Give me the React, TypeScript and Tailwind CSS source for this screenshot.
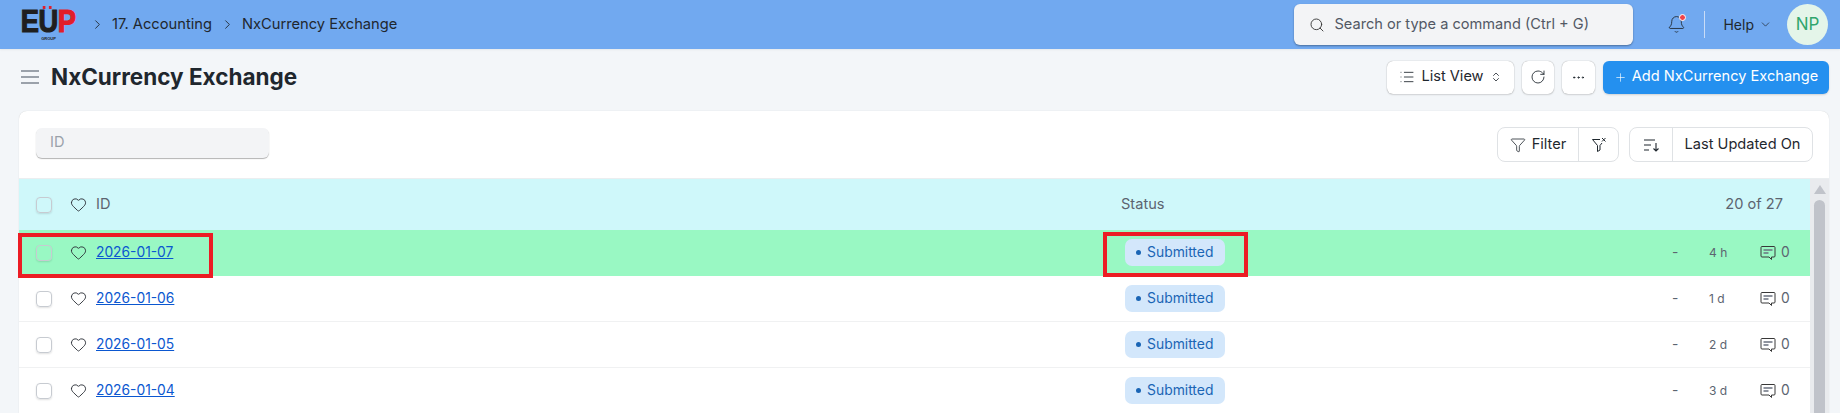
import React from 'react';
import { Search, Bell, ChevronDown, ChevronRight, ChevronsUpDown, RotateCw, Ellipsis, Plus, List, Heart, Filter } from 'lucide-react';

const rows = [
  { id: '2026-01-07', age: '4 h', active: true },
  { id: '2026-01-06', age: '1 d', active: false },
  { id: '2026-01-05', age: '2 d', active: false },
  { id: '2026-01-04', age: '3 d', active: false },
];

const CommentIcon = () => (
  <svg width="16" height="16" viewBox="0 0 16 16" fill="none" stroke="#383838" strokeWidth="1" strokeLinejoin="round">
    <path d="M2 1.500h12a1 1 0 0 1 1 1v8.500a1 1 0 0 1-1 1h-2.500v2.500l-2.500-2.500h-7a1 1 0 0 1-1-1v-8.500a1 1 0 0 1 1-1z" />
    <path d="M3.500 5h9M3.500 8h5" strokeWidth="1.300" stroke="#6b7280" />
  </svg>
);

const FilterClearIcon = () => (
  <svg width="16" height="16" viewBox="0 0 16 16" fill="none" stroke="#1f272e" strokeWidth="1" strokeLinejoin="round">
    <path d="M9 2.500h-7.500l5 6v6l2.500-1.500v-4.500l2-2.500" />
    <path d="M11 1l3.500 3.500M14.500 1l-3.500 3.500" />
  </svg>
);

const SortIcon = () => (
  <svg width="17" height="16" viewBox="0 0 17 16" fill="none" stroke="#1f272e" strokeWidth="1.100">
    <path d="M1 3h11M1 8h7M1 13h5" />
    <path d="M13 6v8M10.500 11.500l2.500 2.500 2.500-2.500" />
  </svg>
);

const Checkbox = () => (
  <span className="block shrink-0 w-[16px] h-[16px] rounded-[4px] border border-[#c7cbd1] shadow-[0_1px_2px_rgba(0,0,0,0.12)]" />
);

const Logo = () => (
  <div className="w-[55px] h-[36px] flex flex-col items-center font-['Liberation_Sans',sans-serif]">
    <div className="relative flex h-[28px] items-end text-[31px] leading-[26px] font-bold tracking-[-0.500px] text-[#1f1f1f] scale-x-[0.88] [-webkit-text-stroke:1.200px_currentColor]">
      <span>E</span>
      <span className="relative">
        U
        <span className="absolute left-[5px] top-[-3px] w-[3px] h-[3px] bg-[#e11d2a]" />
        <span className="absolute left-[12px] top-[-3px] w-[3px] h-[3px] bg-[#e11d2a]" />
      </span>
      <span className="text-[#e11d2a]">P</span>
    </div>
    <span className="text-[4px] leading-[5px] mt-[1px] font-bold text-[#222]">GROUP</span>
  </div>
);

export default function App() {
  return (
    <div className="relative w-[1840px] h-[413px] overflow-hidden bg-[#f3f6f9] font-['Inter',sans-serif]">
      {/* Navbar */}
      <header className="h-[49px] bg-[#71a9f0] flex items-center pl-[21px] pr-[12px] shadow-[0_1px_2px_rgba(0,0,0,0.06)]">
        <Logo />
        <ChevronRight size={15} strokeWidth={1.4} className="ml-[14px] text-[#1f272e]" />
        <span className="ml-[7px] text-[14.700px] text-[#1f272e]">17. Accounting</span>
        <ChevronRight size={15} strokeWidth={1.4} className="ml-[8px] text-[#1f272e]" />
        <span className="ml-[7px] text-[14.700px] text-[#1f272e]">NxCurrency Exchange</span>

        <div className="ml-auto flex items-center">
          <div className="w-[339px] h-[41px] rounded-[6px] bg-[#f3f4f6] shadow-[0_1px_2px_rgba(0,0,0,0.35)] flex items-center pl-[15px] text-[14.600px] text-[#525864]">
            <Search size={16} strokeWidth={1.4} className="text-[#383838] mr-[9px]" />
            Search or type a command (Ctrl + G)
          </div>
          <div className="relative ml-[34px]">
            <Bell size={19} strokeWidth={1.1} className="text-[#1f272e]" />
            <span className="absolute -top-[1px] right-[0px] w-[5px] h-[5px] rounded-full bg-[#f0434a] border border-white box-content" />
          </div>
          <span className="ml-[18px] w-px h-[27px] bg-[#c9dcf7]" />
          <span className="ml-[18px] text-[14px] text-[#1f272e]">Help</span>
          <ChevronDown size={13} strokeWidth={1.3} className="ml-[5px] text-[#1f272e]" />
          <div className="ml-[15px] w-[41px] h-[41px] rounded-full bg-[#e4f5e9] flex items-center justify-center text-[17px] text-[#30a66d]">NP</div>
        </div>
      </header>

      {/* Page head */}
      <div className="h-[56px] mb-[6px] flex items-center pl-[21px] pr-[11px]">
        <div className="flex flex-col gap-[4px] w-[18px]">
          <span className="h-[2px] bg-[#9aa1aa]" />
          <span className="h-[2px] bg-[#9aa1aa]" />
          <span className="h-[2px] bg-[#9aa1aa]" />
        </div>
        <h1 className="ml-[12px] text-[22.500px] font-bold text-[#1f272e]">NxCurrency Exchange</h1>

        <div className="ml-auto flex items-center text-[14.600px] text-[#1f272e]">
          <button className="h-[33px] w-[127px] rounded-[6px] bg-white shadow-[0_0_1px_rgba(0,0,0,0.4),0_1px_2px_rgba(0,0,0,0.12)] flex items-center justify-center">
            <List size={16} strokeWidth={1.3} className="mr-[6px]" />
            List View
            <ChevronsUpDown size={12} strokeWidth={1.6} className="ml-[6px]" />
          </button>
          <button className="ml-[8px] h-[33px] w-[32px] rounded-[6px] bg-white shadow-[0_0_1px_rgba(0,0,0,0.4),0_1px_2px_rgba(0,0,0,0.12)] flex items-center justify-center">
            <RotateCw size={16} strokeWidth={1.3} />
          </button>
          <button className="ml-[8px] h-[33px] w-[33px] rounded-[6px] bg-white shadow-[0_0_1px_rgba(0,0,0,0.4),0_1px_2px_rgba(0,0,0,0.12)] flex items-center justify-center">
            <Ellipsis size={15} strokeWidth={1.6} />
          </button>
          <button className="ml-[8px] h-[33px] w-[226px] rounded-[6px] bg-[#2490ef] text-white shadow-[0_1px_2px_rgba(0,0,0,0.15)] flex items-center justify-center">
            <Plus size={13} strokeWidth={1.2} className="mr-[5px]" />
            Add NxCurrency Exchange
          </button>
        </div>
      </div>

      {/* List card */}
      <div className="mr-[11px] ml-[19px] rounded-t-[8px] bg-white shadow-[0_0_1px_rgba(0,0,0,0.2)]">
        <div className="h-[68px] flex items-center pl-[17px] pr-[16px] border-b border-[#ebeef0]">
          <div className="self-start mt-[17px] w-[233px] h-[30px] rounded-[6px] bg-[#f3f4f6] shadow-[0_1px_1px_rgba(0,0,0,0.3)] flex items-center pl-[14px] text-[14.600px] text-[#9aa1aa]">ID</div>
          <div className="ml-auto flex items-center text-[14.600px] text-[#1f272e]">
            <div className="h-[35px] w-[122px] rounded-[8px] border border-[#dfe2e5] flex items-center">
              <div className="w-[81px] h-full flex items-center justify-center border-r border-[#dfe2e5]">
                <Filter size={16} strokeWidth={1.2} className="mr-[6px]" />
                Filter
              </div>
              <div className="flex-1 flex items-center justify-center">
                <FilterClearIcon />
              </div>
            </div>
            <div className="ml-[10px] h-[35px] w-[184px] rounded-[8px] border border-[#dfe2e5] flex items-center">
              <div className="w-[43px] h-full flex items-center justify-center border-r border-[#dfe2e5]">
                <SortIcon />
              </div>
              <div className="flex-1 text-center">Last Updated On</div>
            </div>
          </div>
        </div>

        <div className="flex">
          <div className="flex-1 min-w-0">
            {/* Column header */}
            <div className="h-[51px] bg-[#cff8fa] flex items-center pl-[17px] text-[14.600px] text-[#5c6470]">
              <Checkbox />
              <Heart size={17} strokeWidth={1.3} className="ml-[18px] text-[#2b2f36]" />
              <span className="ml-[9px] w-[1025px]">ID</span>
              <span>Status</span>
              <span className="ml-auto mr-[27px]">20 of 27</span>
            </div>

            {rows.map((row) => (
              <div
                key={row.id}
                className={`h-[46px] flex items-center pl-[17px] text-[13.800px] border-b ${row.active ? 'bg-[#99f8c3] border-transparent' : 'bg-white border-[#f0f1f2]'}`}
              >
                <Checkbox />
                <Heart size={17} strokeWidth={1.3} className="ml-[18px] text-[#2b2f36]" />
                <span className="ml-[9px] w-[1029px]">
                  <a className="underline text-[#0b57d0]">{row.id}</a>
                </span>
                <span className="h-[27px] w-[100px] rounded-[7px] bg-[#d3e7fb] flex items-center pl-[11px] text-[13.900px] text-[#1a65b5]">
                  <span className="w-[5px] h-[5px] rounded-full bg-[#1a65b5] mr-[6px]" />
                  Submitted
                </span>
                <span className="ml-[447px] w-[37px] text-[#5c6470]">-</span>
                <span className="w-[51px] text-[12px] text-[#5c6470]">{row.age}</span>
                <CommentIcon />
                <span className="ml-[5px] text-[#5c6470]">0</span>
              </div>
            ))}
          </div>

          {/* Scrollbar */}
          <div className="shrink-0 w-[19px] bg-[#e9ebee] flex flex-col items-center pt-[6px]">
            <span className="w-0 h-0 border-x-[6px] border-x-transparent border-b-[9px] border-b-[#c0c3ca]" />
            <span className="mt-[6px] w-[11px] flex-1 rounded-t-[6px] bg-[#c0c3ca]" />
          </div>
        </div>
      </div>

      {/* Annotation boxes */}
      <div className="absolute left-[18px] top-[233px] w-[195px] h-[45px] border-[4px] border-[#ec1c24]" />
      <div className="absolute left-[1103px] top-[232px] w-[145px] h-[45px] border-[4px] border-[#ec1c24]" />
    </div>
  );
}
